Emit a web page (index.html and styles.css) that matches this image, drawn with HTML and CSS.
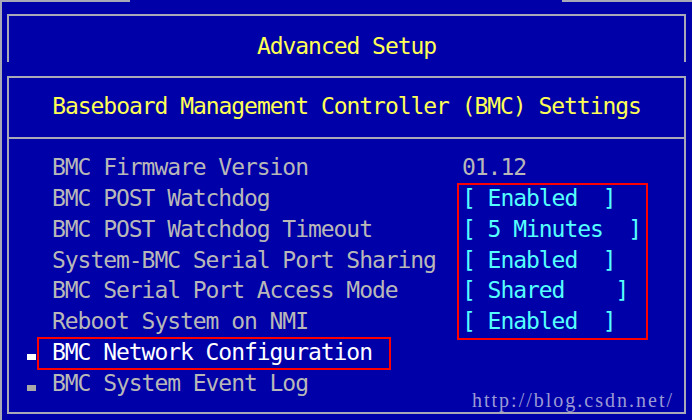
FILE: index.html
```html
<!DOCTYPE html>
<html lang="en">
<head>
    <meta charset="UTF-8">
    <meta name="viewport" content="width=device-width, initial-scale=1.0">
    <title>Advanced Setup - BMC Settings</title>
    <link rel="stylesheet" href="styles.css">
</head>
<body>
    <div class="screen">
        <div class="tabline">
            <span class="seg seg-left"></span>
            <span class="seg seg-right"></span>
        </div>

        <div class="panel head">
            <h1>Advanced Setup</h1>
        </div>

        <div class="panel main">
            <h2>Baseboard Management Controller (BMC) Settings</h2>

            <div class="body">
                <div class="labels">
                    <div class="row"><span class="mark"></span><span>BMC Firmware Version</span></div>
                    <div class="row"><span class="mark"></span><span>BMC POST Watchdog</span></div>
                    <div class="row"><span class="mark"></span><span>BMC POST Watchdog Timeout</span></div>
                    <div class="row"><span class="mark"></span><span>System-BMC Serial Port Sharing</span></div>
                    <div class="row"><span class="mark"></span><span>BMC Serial Port Access Mode</span></div>
                    <div class="row"><span class="mark"></span><span>Reboot System on NMI</span></div>
                    <div class="row submenu selected"><span class="mark on"></span><span>BMC Network Configuration</span></div>
                    <div class="row submenu"><span class="mark off"></span><span>BMC System Event Log</span></div>
                </div>

                <div class="values">
                    <div class="row info">01.12</div>
                    <div class="options">
                        <div class="row">[ Enabled  ]</div>
                        <div class="row">[ 5 Minutes  ]</div>
                        <div class="row">[ Enabled  ]</div>
                        <div class="row">[ Shared    ]</div>
                        <div class="row">[ Enabled  ]</div>
                    </div>
                </div>
            </div>
        </div>

        <div class="watermark">http://blog.csdn.net/</div>
    </div>
</body>
</html>
```

FILE: styles.css
```css
body {
    margin: 0;
    background: #0000a8;
}
.screen {
    position: relative;
    width: 692px;
    height: 420px;
    box-sizing: border-box;
    border-left: 2px solid #a8a8b8;
    background: #0000a8;
    font-family: "DejaVu Sans Mono", monospace;
    font-size: 23px;
    letter-spacing: -1.05px;
    overflow: hidden;
}
.tabline {
    display: flex;
    justify-content: space-between;
    height: 2px;
}
.seg {
    background: #a8a8b8;
}
.seg-left {
    width: 128px;
}
.seg-right {
    width: 130px;
}
.panel {
    width: 679px;
    margin-left: 5px;
    box-sizing: border-box;
    border: 2px solid #a8a8b8;
}
.head {
    margin-top: 12px;
    height: 48px;
    border-bottom: none;
}
h1, h2 {
    margin: 0;
    font-size: 23px;
    font-weight: normal;
    line-height: 32px;
    text-align: center;
    color: #ffff55;
}
h1 {
    padding-top: 14px;
}
.main {
    margin-top: 14px;
    height: 338px;
}
h2 {
    padding: 12px 0 15px;
    border-bottom: 2px solid #a8a8b8;
}
.body {
    display: flex;
    padding: 13.4px 0 0 18px;
    color: #b8b8b8;
}
.labels {
    width: 435px;
}
.row {
    height: 30.75px;
    line-height: 30.75px;
    white-space: pre;
}
.labels .row {
    position: relative;
    display: flex;
}
.mark {
    width: 9px;
    height: 6px;
    margin: 17px 16px 0 0;
}
.mark.on {
    background: #ffffff;
}
.mark.off {
    background: #a8a8a8;
}
.selected {
    color: #ffffff;
}
.selected::after {
    content: '';
    position: absolute;
    left: 10px;
    top: 0;
    width: 354px;
    height: 33px;
    box-sizing: border-box;
    border: 2px solid #ff0000;
}
.options {
    position: relative;
    color: #55ffff;
}
.options::after {
    content: '';
    position: absolute;
    left: -5px;
    top: 0;
    width: 191px;
    height: 157px;
    box-sizing: border-box;
    border: 2px solid #ff0000;
}
.watermark {
    position: absolute;
    left: 470px;
    top: 389px;
    font-family: "Liberation Serif", serif;
    font-size: 20px;
    line-height: 22px;
    letter-spacing: 2px;
    color: #9a9ad4;
}
```
